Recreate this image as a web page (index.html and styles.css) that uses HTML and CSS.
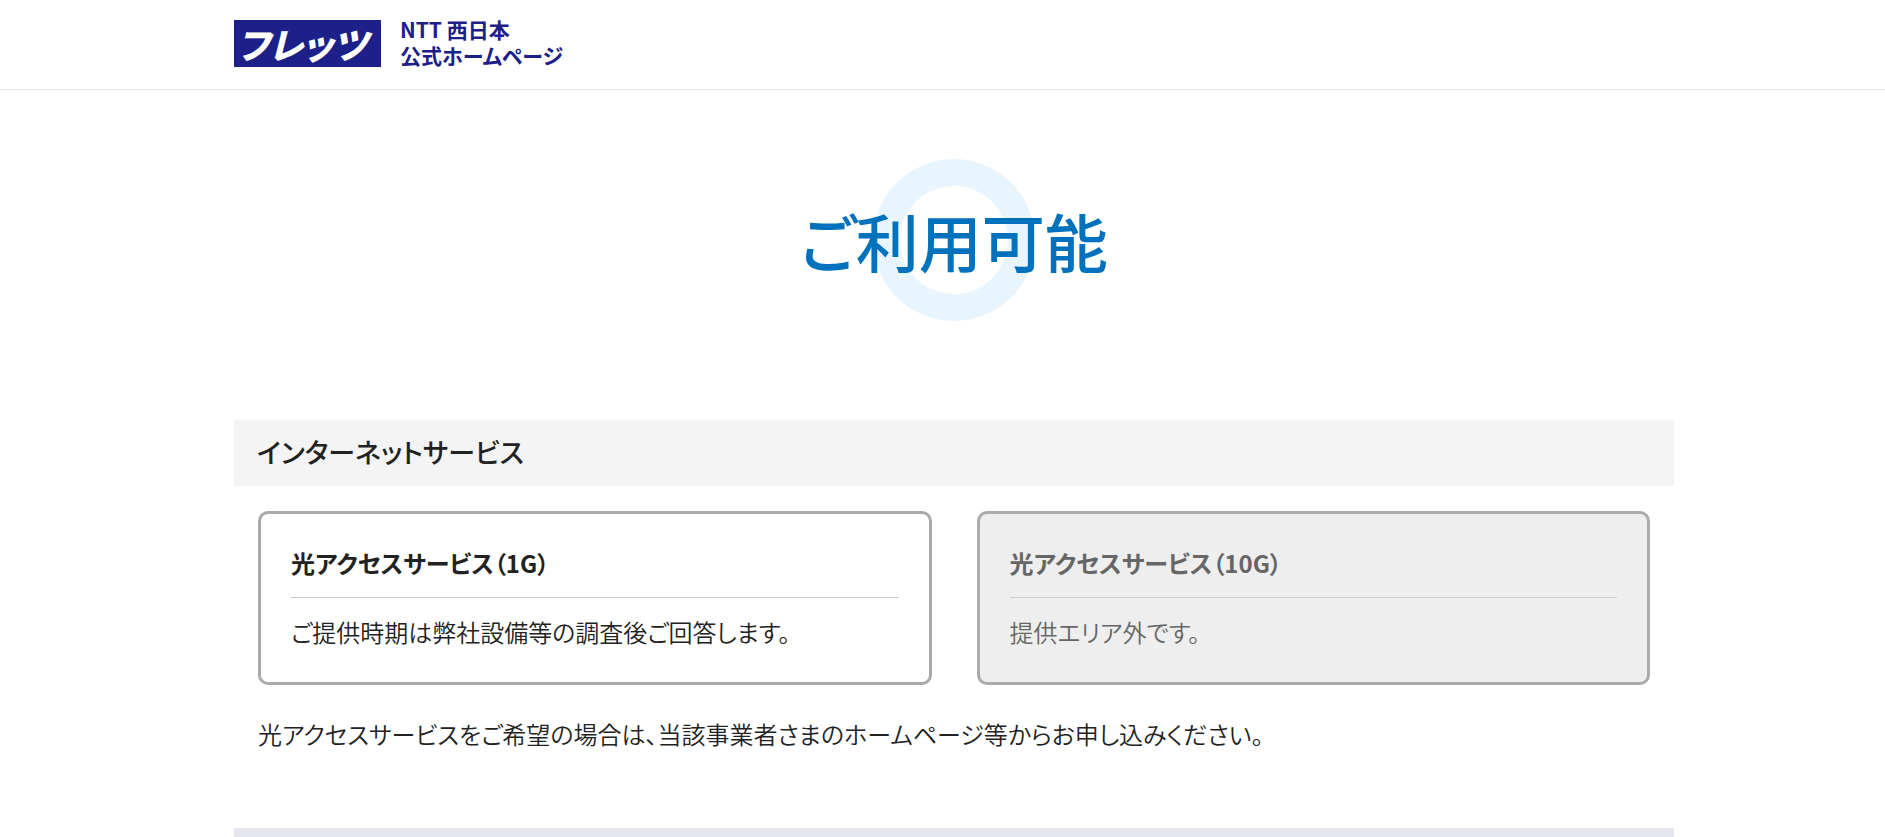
FILE: index.html
```
<!DOCTYPE html>
<html lang="ja">
<head>
  <meta charset="utf-8">
  <meta name="viewport" content="width=device-width, initial-scale=1.0">
  <title>ご利用可能 | フレッツ NTT 西日本公式ホームページ</title>
  <link rel="stylesheet" href="styles.css">
</head>
<body>

  <header class="site-header">
    <div class="header-inner">
      <span class="logo">フレッツ</span>
      <p class="site-name">NTT 西日本<br>公式ホームページ</p>
    </div>
  </header>

  <main class="main">

    <div class="result">
      <svg class="result-ring" viewBox="0 0 162 162" aria-hidden="true">
        <circle cx="81" cy="81" r="67.5" fill="none" stroke="#e8f5fe" stroke-width="27"/>
      </svg>
      <h1 class="result-title">ご利用可能</h1>
    </div>

    <section class="service">
      <h2 class="service-title">インターネットサービス</h2>
      <div class="service-body">
        <div class="cards">
          <div class="card">
            <h3 class="card-title">光アクセスサービス（1G）</h3>
            <p class="card-text">ご提供時期は弊社設備等の調査後ご回答します。</p>
          </div>
          <div class="card card-disabled">
            <h3 class="card-title">光アクセスサービス（10G）</h3>
            <p class="card-text">提供エリア外です。</p>
          </div>
        </div>
        <p class="note">光アクセスサービスをご希望の場合は、当該事業者さまのホームページ等からお申し込みください。</p>
      </div>
    </section>

    <div class="next-panel"></div>

  </main>

</body>
</html>
```
FILE: styles.css
```
* { box-sizing: border-box; }
body { display: flex; flex-direction: column; min-height: 100vh; margin: 0; background: #fff; color: #222; font-family: "Noto Sans CJK JP", sans-serif; font-size: 24px; font-weight: 350; line-height: 36px; font-feature-settings: "palt"; }
h1, h2, h3, p { margin: 0; }

.site-header { padding-left: 23px; border-bottom: 1px solid #e5e5e5; }
.header-inner { display: flex; align-items: flex-start; gap: 19px; max-width: 1440px; height: 89px; margin: 0 auto; padding-top: 16px; }
.logo { width: 147px; height: 47px; margin-top: 4px; padding-right: 10px; background: #1d2088; color: #fff; font-size: 36px; font-weight: 900; font-style: italic; line-height: 46px; text-align: center; }
.site-name { color: #1d2088; font-size: 21px; font-weight: 700; line-height: 26px; }

.main { display: flex; flex: 1; flex-direction: column; padding-left: 23px; }
.result { display: grid; place-items: center; padding: 69px 0 99px; }
.result-ring, .result-title { grid-area: 1 / 1; }
.result-ring { width: 162px; height: 162px; }
.result-title { z-index: 1; color: #0071bd; font-size: 63px; font-weight: 500; line-height: 94px; }

.service, .next-panel { width: 100%; max-width: 1440px; margin: 0 auto; }
.service-title { padding: 14px 23px 16px; background: #f4f4f4; font-size: 27px; font-weight: 500; line-height: 36px; }
.service-body { padding: 25px 24px 76px; }
.cards { display: grid; grid-template-columns: 1fr 1fr; gap: 45px; }
.card { padding: 31px 30px; border: 3px solid #aaa; border-radius: 10px; }
.card-disabled { background: #eee; color: #666; }
.card-title { padding-bottom: 16px; border-bottom: 1px solid #ccc; font-size: 24px; font-weight: 700; }
.card-text { padding: 16px 0 1px; }
.note { padding-top: 31px; }
.next-panel { flex: 1; background: #e6e7ed; }
```
